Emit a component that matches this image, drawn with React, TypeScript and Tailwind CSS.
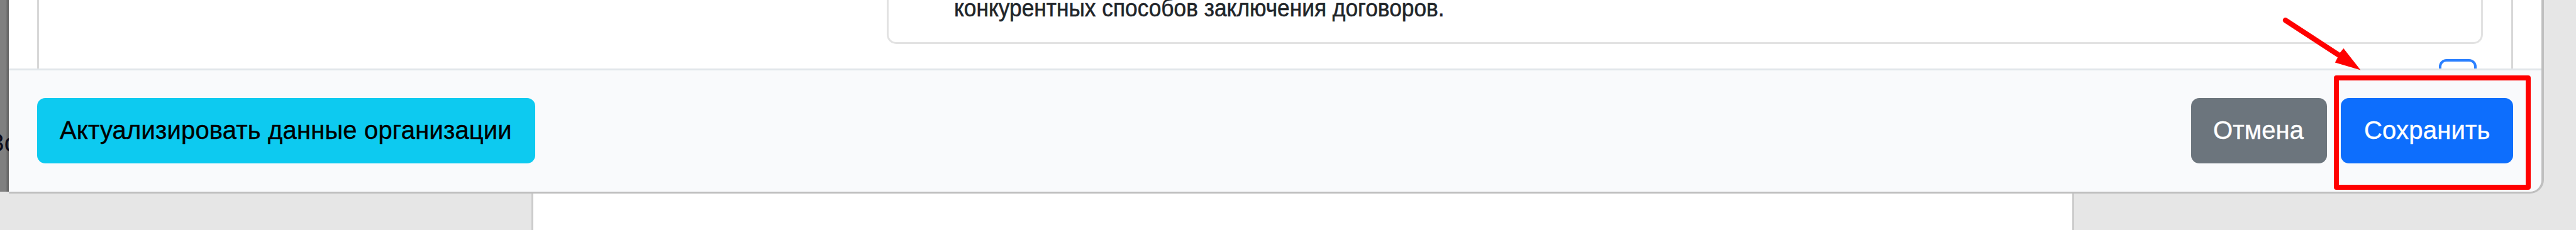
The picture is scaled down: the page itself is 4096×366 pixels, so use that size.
import React from 'react';

const BUTTON =
  'h-[104px] rounded-[13px] pb-[3px] text-[40px] leading-[60px] text-left whitespace-nowrap [-webkit-text-stroke:0.4px]';

function FooterBar() {
  return (
    <footer className="flex h-[196px] shrink-0 items-start justify-between border-t-[3px] border-[#e1e6ea] bg-[#f9fafc] pt-11 pr-[45px] pl-[45px]">
      <button className={`${BUTTON} w-[792px] bg-[#0dcaf0] pl-9 tracking-[0.16px] text-black`}>
        Актуализировать данные организации
      </button>
      <div className="flex gap-[22px]">
        <button className={`${BUTTON} w-[216px] bg-[#6c757d] pl-[35px] tracking-[0.1px] text-white`}>Отмена</button>
        <button className={`${BUTTON} w-[274px] bg-[#0d6efd] pl-[37px] tracking-[0.2px] text-white`}>Сохранить</button>
      </div>
    </footer>
  );
}

function ContentArea() {
  return (
    <div className="flex h-[109px] shrink-0 overflow-hidden bg-white px-[45px]">
      <div className="flex flex-1 flex-col items-end border-x-[3px] border-[#d8d8d8]">
        <div className="mr-[45px] h-[70px] w-[2538px] shrink-0 rounded-b-[15px] border-[3px] border-t-0 border-[#e2e2e2] pl-[104px]">
          <p className="-mt-[12.5px] scale-y-[1.08] text-[35.3px] leading-[50px] whitespace-nowrap text-[#212529] [-webkit-text-stroke:0.5px]">
            конкурентных способов заключения договоров.
          </p>
        </div>
        <div className="mt-6 mr-[55px] h-[60px] w-[60px] shrink-0 rounded-[12px] border-4 border-[#2b80ff]" />
      </div>
    </div>
  );
}

export default function App() {
  return (
    <div className="relative flex h-[366px] w-[4096px] flex-col overflow-hidden bg-[#e6e6e6] font-['Liberation_Sans',Arial,sans-serif]">
      <div className="flex h-[308px] shrink-0">
        {/* dimmed page behind the dialog */}
        <div className="flex h-[305px] w-[14px] shrink-0 items-end justify-end overflow-hidden bg-[linear-gradient(to_right,#808080_9px,#626262_13px)]">
          <span className="-mr-[15px] mb-[55px] text-[40px] leading-[46px] text-[#0b0b1c]">Зо</span>
        </div>
        <div className="flex w-[4031px] flex-col overflow-hidden rounded-br-[22px] border-r-4 border-b-[3px] border-[#bfbfbf]">
          <ContentArea />
          <FooterBar />
        </div>
      </div>
      <div className="flex flex-1 justify-start pl-[845px]">
        <div className="w-[2453px] border-x-[3px] border-[#cccccc] bg-white" />
      </div>

      <div className="absolute top-[120px] left-[3711px] h-[182px] w-[313px] rounded-[4px] border-8 border-[#ff0000]" />
      <svg className="absolute top-0 left-[3600px]" width="180" height="120" viewBox="0 0 180 120" fill="#ff0000">
        <path d="M34 32.2 L124 91" stroke="#ff0000" strokeWidth="8.5" strokeLinecap="round" />
        <path d="M153.5 111.5 L126.4 77 L121 83.5 L116 93.5 L112.8 99.6 Z" />
      </svg>
    </div>
  );
}
